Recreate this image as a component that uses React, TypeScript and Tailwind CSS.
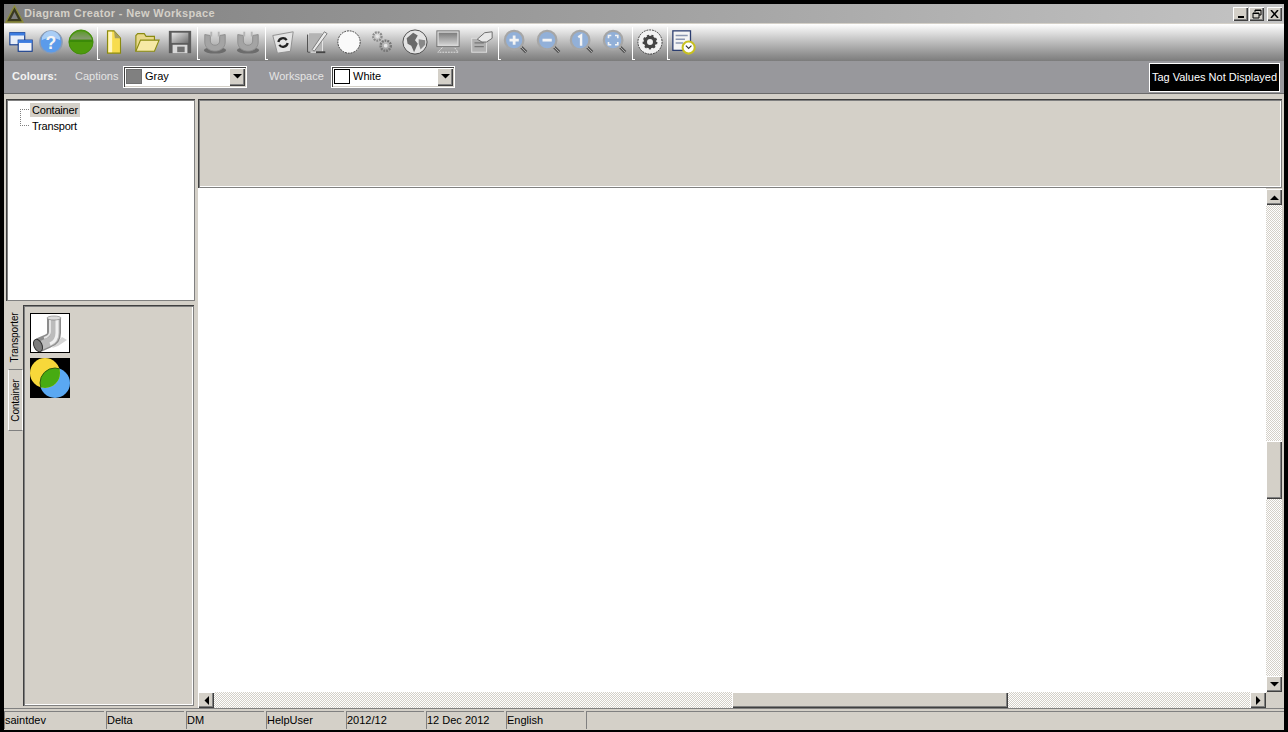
import React from "react";

const font = "font-['Liberation_Sans',Arial,sans-serif]";
const sunken = "shadow-[inset_1px_1px_0_#404040,inset_2px_2px_0_#808080,inset_-1px_-1px_0_#808080,inset_-2px_-2px_0_#fff]";
const raised = "shadow-[inset_1px_1px_0_#fff,inset_-1px_-1px_0_#404040,inset_-2px_-2px_0_#808080]";
const dither = "bg-[repeating-conic-gradient(#d4d0c8_0_25%,#ffffff_0_50%)] bg-[length:2px_2px]";

const Ico = ({ children }: { children: React.ReactNode }) => (
  <svg width="26" height="26" viewBox="0 0 28 28">
    {children}
  </svg>
);

const Windows = () => (
  <Ico>
    <rect x="2" y="4" width="16" height="13" fill="#e8eef8" stroke="#123a8c" strokeWidth="1.2" />
    <rect x="2" y="4" width="16" height="3" fill="#3c7ce0" />
    <rect x="11" y="12" width="15" height="12" fill="#f4f6fb" stroke="#123a8c" strokeWidth="1.2" />
    <rect x="11" y="12" width="15" height="3" fill="#3c7ce0" />
  </Ico>
);

const Help = () => (
  <Ico>
    <circle cx="14" cy="14" r="12" fill="#5b9bea" stroke="#8d9bb0" strokeWidth="1.5" />
    <path d="M4 12a10 10 0 0 1 20 0c-6-3-14-3-20 0z" fill="#a9cdf5" />
    <text x="14" y="21" textAnchor="middle" fontSize="19" fontWeight="700" fontFamily="Liberation Sans" fill="#f4f4f4">?</text>
  </Ico>
);

const GreenBall = () => (
  <Ico>
    <defs>
      <linearGradient id="ballTop" x1="0" x2="0" y1="0" y2="1">
        <stop offset="0" stopColor="#5f9a30" />
        <stop offset="1" stopColor="#8a9a78" />
      </linearGradient>
    </defs>
    <circle cx="14" cy="14" r="13" fill="#4d9a0c" stroke="#3f8a08" />
    <path d="M2 11.5a12.5 12.5 0 0 1 24 0z" fill="url(#ballTop)" />
    <rect x="1.5" y="11.5" width="25" height="2.5" fill="#3b8a08" />
  </Ico>
);

const NewDoc = () => (
  <Ico>
    <path d="M7 2h7l7 8v16H7z" fill="#f7dc4e" stroke="#8a8a10" strokeWidth="1.2" />
    <path d="M8 3h4v22H8z" fill="#fff6c0" />
    <path d="M14 2l7 8h-6z" fill="#a8a060" />
  </Ico>
);

const Folder = () => (
  <Ico>
    <path d="M2 24V7l2-2h7l2 3h9v4" fill="#e8d88a" stroke="#8a8a10" strokeWidth="1.2" />
    <path d="M2 24l5-12h20l-5 12z" fill="#f6e9a6" stroke="#8a8a10" strokeWidth="1.2" />
  </Ico>
);

const Disk = () => (
  <Ico>
    <defs>
      <linearGradient id="diskTop" x1="0" x2="1" y1="0" y2="1">
        <stop offset="0" stopColor="#e8e8e8" />
        <stop offset="1" stopColor="#707070" />
      </linearGradient>
    </defs>
    <rect x="2" y="2" width="24" height="24" fill="#5c5c5c" />
    <rect x="5" y="4" width="18" height="11" fill="url(#diskTop)" />
    <rect x="6" y="17" width="16" height="9" fill="#d8d8d8" />
    <rect x="11" y="19" width="8" height="6" fill="#707070" />
  </Ico>
);

const Magnet = () => (
  <Ico>
    <ellipse cx="14" cy="23" rx="12" ry="3.5" fill="#6c6c6c" />
    <path d="M3 6l6 1v6c0 6 10 6 10 0V7l6-1v8c0 13-22 13-22 0z" fill="#a4a4a4" stroke="#8e8e8e" />
    <path d="M9 3h2v5H9zM17 3h2v5h-2z" fill="#b4b4b4" />
  </Ico>
);

const Recycle = () => (
  <Ico>
    <path d="M3 7l22-4-3 21-14 2z" fill="#e4e4e4" stroke="#8c8c8c" />
    <path d="M9 14a5 5 0 0 1 9-2M19 15a5 5 0 0 1-9 2" fill="none" stroke="#222" strokeWidth="2.4" />
  </Ico>
);

const Pencil = () => (
  <Ico>
    <path d="M6 4h15v21H5z" fill="#b4b4b4" stroke="#e8e8e8" />
    <path d="M5 6v19h3" fill="none" stroke="#333" />
    <path d="M10 22l13-19 3 2-14 19z" fill="#ececec" stroke="#777" />
    <path d="M14 25h10" stroke="#444" strokeWidth="2" />
  </Ico>
);

const Circle = () => (
  <Ico>
    <circle cx="14" cy="14" r="12" fill="#fafafa" stroke="#333" strokeDasharray="2 1" />
  </Ico>
);

const Gears = () => (
  <Ico>
    <circle cx="9" cy="8" r="4.5" fill="none" stroke="#8a8a8a" strokeWidth="2.4" strokeDasharray="2 1" />
    <circle cx="18" cy="18" r="5.5" fill="none" stroke="#777" strokeWidth="2.6" strokeDasharray="2 1" />
    <circle cx="18" cy="18" r="2" fill="#e8e8e8" />
    <circle cx="9" cy="8" r="1.6" fill="#e8e8e8" />
  </Ico>
);

const Globe = () => (
  <Ico>
    <circle cx="14" cy="14" r="13" fill="#e4e4e4" stroke="#444" />
    <path d="M5 10l7-6 5 3-3 5 3 4-4 9-3-7-4-2z" fill="#6a6a6a" />
    <path d="M18 11l7 1 0 5-5 5-2-6z" fill="#888" />
  </Ico>
);

const Monitor = () => (
  <Ico>
    <defs>
      <linearGradient id="screen" x1="0" x2="0" y1="0" y2="1">
        <stop offset="0" stopColor="#7c7c7c" />
        <stop offset="1" stopColor="#d0d0d0" />
      </linearGradient>
    </defs>
    <rect x="2" y="2" width="24" height="17" fill="#d8d8d8" stroke="#707070" />
    <rect x="4" y="4" width="20" height="13" fill="url(#screen)" />
    <path d="M8 20l-5 5h22l-4-5" fill="none" stroke="#e4e4e4" strokeDasharray="2 1" />
  </Ico>
);

const HandDoc = () => (
  <Ico>
    <rect x="4" y="10" width="16" height="15" fill="#b0b0b0" stroke="#e0e0e0" />
    <path d="M7 15h10M7 19h10" stroke="#777" strokeWidth="1.4" />
    <path d="M10 11l8-7 8-1v7l-6 4h-5z" fill="#e8e8e8" stroke="#666" />
  </Ico>
);

const Zoom = ({ kind }: { kind: "plus" | "minus" | "one" | "fit" }) => (
  <Ico>
    <path d="M18 18l7 7" stroke="#555" strokeWidth="3.4" />
    <path d="M18 18l7 7" stroke="#b0b0b0" strokeWidth="1" />
    <circle cx="12" cy="12" r="10" fill="#92b0d8" stroke="#a6a6a6" strokeWidth="2.4" />
    {kind === "plus" && <path d="M7 12h10M12 7v10" stroke="#f4f4f4" strokeWidth="3" />}
    {kind === "minus" && <path d="M7 12h10" stroke="#f4f4f4" strokeWidth="3" />}
    {kind === "one" && <path d="M10 9l3-2v11" fill="none" stroke="#f4f4f4" strokeWidth="2.6" />}
    {kind === "fit" && <path d="M7 10V7h3M14 7h3v3M17 14v3h-3M10 17H7v-3" fill="none" stroke="#f4f4f4" strokeWidth="1.8" />}
  </Ico>
);

const Settings = () => (
  <Ico>
    <circle cx="14" cy="14" r="13" fill="#f2f2f2" stroke="#333" strokeDasharray="2 1" />
    <circle cx="14" cy="14" r="5" fill="none" stroke="#444" strokeWidth="3.6" />
    <circle cx="14" cy="14" r="7" fill="none" stroke="#444" strokeWidth="2" strokeDasharray="2.4 2.4" />
  </Ico>
);

const Schedule = () => (
  <Ico>
    <rect x="2" y="2" width="19" height="21" fill="#f4f4f4" stroke="#2c3e70" strokeWidth="1.4" />
    <path d="M5 7h13M5 11h10M5 15h8" stroke="#8a96b0" strokeWidth="1.6" />
    <circle cx="19" cy="20" r="6.5" fill="#fff" stroke="#c8c020" strokeWidth="2.2" />
    <path d="M16 18l3 3 3-3" fill="none" stroke="#333" strokeWidth="1.2" />
  </Ico>
);

const Separator = () => (
  <div className="ml-[1px] -mr-[2px] mt-[3px] h-[33px] w-[3px] shrink-0 border-b border-l border-white" />
);

const Btn = ({ w, children }: { w: string; children: React.ReactNode }) => (
  <div className={`${w} flex h-[36px] shrink-0 items-center justify-center`}>{children}</div>
);

const Toolbar = () => (
  <div className="flex h-[37px] shrink-0 bg-linear-to-b from-white to-[#7c7c7c] pl-[2px]">
    <Btn w="w-[30px]"><Windows /></Btn>
    <Btn w="w-[30px]"><Help /></Btn>
    <Btn w="w-[30px]"><GreenBall /></Btn>
    <Separator />
    <Btn w="w-[32px]"><NewDoc /></Btn>
    <Btn w="w-[33px]"><Folder /></Btn>
    <Btn w="w-[33px]"><Disk /></Btn>
    <Separator />
    <Btn w="w-[33px]"><Magnet /></Btn>
    <Btn w="w-[33px]"><Magnet /></Btn>
    <Separator />
    <Btn w="w-[33px]"><Recycle /></Btn>
    <Btn w="w-[33px]"><Pencil /></Btn>
    <Btn w="w-[33px]"><Circle /></Btn>
    <Btn w="w-[33px]"><Gears /></Btn>
    <Btn w="w-[33px]"><Globe /></Btn>
    <Btn w="w-[33px]"><Monitor /></Btn>
    <Btn w="w-[33px]"><HandDoc /></Btn>
    <Separator />
    <Btn w="w-[33px]"><Zoom kind="plus" /></Btn>
    <Btn w="w-[33px]"><Zoom kind="minus" /></Btn>
    <Btn w="w-[33px]"><Zoom kind="one" /></Btn>
    <Btn w="w-[33px]"><Zoom kind="fit" /></Btn>
    <Separator />
    <Btn w="w-[33px]"><Settings /></Btn>
    <Separator />
    <Btn w="w-[31px]"><Schedule /></Btn>
  </div>
);

const Arrow = ({ dir }: { dir: "up" | "down" | "left" | "right" }) => {
  const pts = { up: "0,5 4.5,0.5 9,5", down: "0,0 9,0 4.5,4.5", left: "5,0 5,9 0.5,4.5", right: "0,0 0,9 4.5,4.5" }[dir];
  const box = dir === "up" || dir === "down" ? [9, 5] : [5, 9];
  return (
    <svg width={box[0]} height={box[1]} viewBox={`0 0 ${box[0]} ${box[1]}`}>
      <polygon points={pts} fill="#000" />
    </svg>
  );
};

const ScrollBtn = ({ dir }: { dir: "up" | "down" | "left" | "right" }) => (
  <div className={`flex h-4 w-4 shrink-0 items-center justify-center bg-[#d4d0c8] ${raised}`}>
    <Arrow dir={dir} />
  </div>
);

const Combo = ({ swatch, label }: { swatch: string; label: string }) => (
  <div className="flex h-[22px] w-[124px] items-center border border-white bg-white shadow-[inset_1px_1px_0_#404040,inset_-1px_-1px_0_#d4d0c8]">
    <div className={`ml-[2px] h-[15px] w-[16px] border ${swatch}`} />
    <span className="ml-[3px] flex-1 text-[11px] text-black">{label}</span>
    <div className={`mr-[1px] flex h-[18px] w-[16px] items-center justify-center bg-[#d4d0c8] ${raised}`}>
      <Arrow dir="down" />
    </div>
  </div>
);

const WinBtn = ({ children }: { children: React.ReactNode }) => (
  <div className={`flex h-[14px] w-[15px] items-center justify-center bg-[#d4d0c8] ${raised}`}>{children}</div>
);

const Pipe = () => (
  <svg width="40" height="40" viewBox="0 0 40 40" className="block">
    <rect x="0.5" y="0.5" width="39" height="39" fill="#fff" stroke="#000" />
    <path d="M32 24l5 3-9 6-6 2z" fill="#d4d4d4" />
    <path d="M24 5V20Q24 26 18 28L9 32" fill="none" stroke="#8c8c8c" strokeWidth="14" />
    <path d="M25 5V20Q25 27 19 29L10 33" fill="none" stroke="#bcbcbc" strokeWidth="9" />
    <path d="M27 5V20Q27 28 20 31" fill="none" stroke="#f0f0f0" strokeWidth="3" />
    <path d="M20 5V19Q20 23 14 25" fill="none" stroke="#e4e4e4" strokeWidth="2" />
    <ellipse cx="24" cy="5" rx="7" ry="2" fill="#dcdcdc" stroke="#777" strokeWidth="0.6" />
    <ellipse cx="8" cy="32.5" rx="4" ry="6.5" fill="#7c7c7c" stroke="#333" transform="rotate(-25 8 32.5)" />
  </svg>
);

const Venn = () => (
  <svg width="40" height="40" viewBox="0 0 40 40" className="block">
    <defs>
      <clipPath id="yellowClip">
        <circle cx="15" cy="15" r="15" />
      </clipPath>
    </defs>
    <rect width="40" height="40" fill="#000" />
    <circle cx="25" cy="25" r="15" fill="#5aa8f2" />
    <circle cx="15" cy="15" r="15" fill="#f7d83a" />
    <circle cx="25" cy="25" r="15" fill="#47ab12" stroke="#2f5f10" clipPath="url(#yellowClip)" />
  </svg>
);

const cells = ["saintdev", "Delta", "DM", "HelpUser", "2012/12", "12 Dec 2012", "English"];
const cellW = ["w-[100px]", "w-[78px]", "w-[78px]", "w-[78px]", "w-[78px]", "w-[78px]", "w-[78px]"];

export default function App() {
  return (
    <div className={`flex h-[732px] w-[1288px] flex-col overflow-hidden bg-black pb-[2px] pl-[4px] pr-[4px] pt-[4px] text-[11px] ${font}`}>
      {/* Title bar */}
      <div className="flex h-[19px] shrink-0 items-center bg-linear-to-r from-[#7f7f7f] to-[#c4c4c4] pr-[2px]">
        <svg width="19" height="18" viewBox="0 0 19 18" className="ml-[1px]">
          <polygon points="9.5,1 18,17 1,17" fill="#3a3a20" stroke="#8c8c3a" strokeWidth="1.4" />
          <polygon points="9.5,7 13,14 6,14" fill="#7f7f7f" />
        </svg>
        <span className="flex-1 text-[11px] font-bold tracking-[0.35px] text-[#d4d0c8]">Diagram Creator - New Workspace</span>
        <div className="flex items-center gap-[1px]">
          <WinBtn>
            <span className="mt-[6px] block h-[2px] w-[6px] bg-black" />
          </WinBtn>
          <WinBtn>
            <svg width="10" height="10" viewBox="0 0 10 10">
              <path d="M3 3V1h6v5H7M1 4h6v5H1zM1 4.5h6M3 1.5h6" fill="none" stroke="#000" />
            </svg>
          </WinBtn>
          <div className="ml-[2px]">
            <WinBtn>
              <svg width="9" height="8" viewBox="0 0 9 8">
                <path d="M1 0l7 8M8 0L1 8" stroke="#000" strokeWidth="1.5" />
              </svg>
            </WinBtn>
          </div>
        </div>
      </div>
      <div className="h-px shrink-0 bg-[#d4d0c8]" />

      <Toolbar />

      {/* Colours bar */}
      <div className="flex h-[33px] shrink-0 items-center border-b border-[#6a6a6a] bg-[#98989c] pb-[1px] pl-[8px] pr-[4px]">
        <span className="w-[63px] font-bold text-[#f2f2f2]">Colours:</span>
        <span className="w-[48px] text-[#e4e4e4]">Captions</span>
        <Combo swatch="border-[#707070] bg-[#808080]" label="Gray" />
        <span className="ml-[22px] w-[62px] text-[#e4e4e4]">Workspace</span>
        <Combo swatch="border-black bg-white" label="White" />
        <div className="ml-auto mt-[1px] flex h-[29px] w-[131px] items-center justify-center border border-white bg-black text-[11px] text-white">
          Tag Values Not Displayed
        </div>
      </div>

      {/* Main area */}
      <div className="flex min-h-0 flex-1 bg-[#d4d0c8] pt-[5px]">
        <div className="ml-[2px] flex w-[189px] shrink-0 flex-col">
          <div className={`relative h-[202px] shrink-0 bg-white pl-[24px] pt-[3px] tracking-[-0.2px] ${sunken}`}>
            <div className="h-[16px] text-black">
              <span className="bg-[#d4d0c8] px-[2px] py-[1px]">Container</span>
            </div>
            <div className="h-[16px] pl-[2px] text-black">Transport</div>
            {/* tree connector */}
            <div className="absolute left-[14px] top-[10px] h-[17px] w-[9px] border-b border-l border-t border-dotted border-[#808080]" />
          </div>
          <div className="mt-[4px] flex min-h-0 flex-1">
            <div className="flex w-[17px] shrink-0 flex-col">
              <div className="flex h-[64px] w-[17px] items-center justify-center bg-[#d4d0c8]">
                <span className="-rotate-90 whitespace-nowrap text-[10px] tracking-[-0.1px] text-black">Transporter</span>
              </div>
              <div className="flex h-[62px] w-[15px] items-center justify-center self-end border-y border-l border-r border-y-[#808080] border-l-white border-r-white">
                <span className="-rotate-90 whitespace-nowrap text-[10px] tracking-[-0.1px] text-black">Container</span>
              </div>
            </div>
            <div className={`mb-[2px] mr-[1px] flex flex-1 flex-col gap-[5px] bg-[#d4d0c8] pl-[7px] pt-[8px] ${sunken}`}>
              <Pipe />
              <Venn />
            </div>
          </div>
        </div>

        <div className="ml-[3px] flex min-w-0 flex-1 flex-col pr-[2px]">
          <div className={`h-[89px] shrink-0 bg-[#d4d0c8] ${sunken}`} />
          <div className="flex min-h-0 flex-1">
            <div className="flex min-w-0 flex-1 flex-col bg-white">
              <div className="flex-1" />
            </div>
            <div className="flex w-[16px] shrink-0 flex-col pt-[1px]">
              <ScrollBtn dir="up" />
              <div className={`h-[236px] ${dither}`} />
              <div className={`h-[58px] shrink-0 bg-[#d4d0c8] ${raised}`} />
              <div className={`flex-1 ${dither}`} />
              <ScrollBtn dir="down" />
            </div>
          </div>
          <div className="flex h-[16px] shrink-0">
            <ScrollBtn dir="left" />
            <div className={`w-[518px] ${dither}`} />
            <div className={`w-[276px] bg-[#d4d0c8] ${raised}`} />
            <div className={`flex-1 ${dither}`} />
            <ScrollBtn dir="right" />
            <div className="w-[16px] shrink-0 bg-[#d4d0c8]" />
          </div>
        </div>
      </div>

      {/* Status bar */}
      <div className="flex h-[22px] shrink-0 gap-[2px] border-t border-[#808080] bg-[#d4d0c8] pb-[1px] pt-[2px]">
        {cells.map((c, i) => (
          <div key={c} className={`${cellW[i]} flex items-center border-l border-t border-[#808080] text-black`}>
            {c}
          </div>
        ))}
        <div className="flex-1 border-l border-t border-[#808080]" />
      </div>
    </div>
  );
}
